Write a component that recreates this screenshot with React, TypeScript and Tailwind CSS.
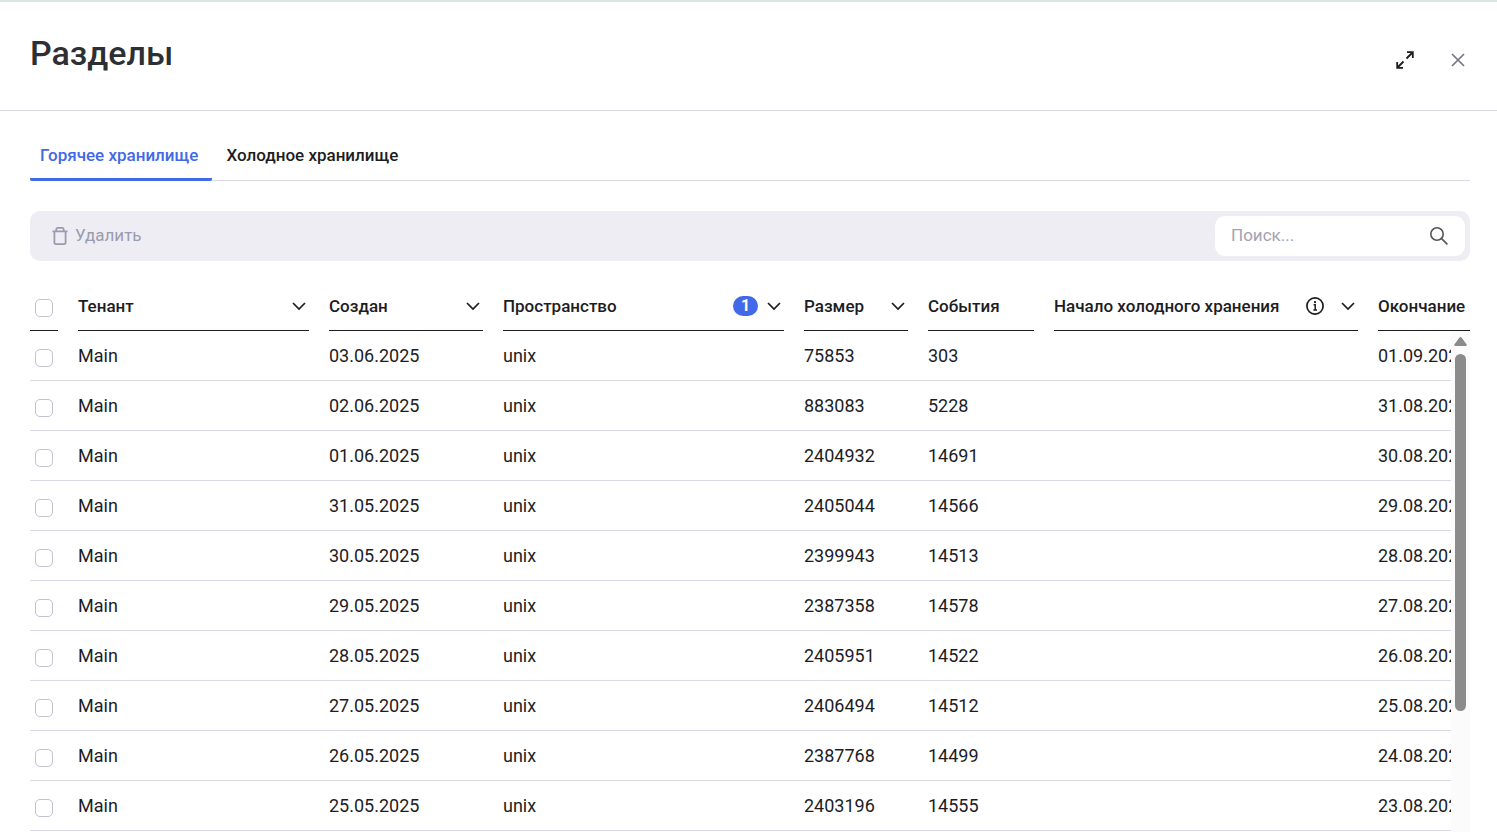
import React from "react";

const partitions = [
  { created: "03.06.2025", size: "75853", events: "303", expires: "01.09.2025" },
  { created: "02.06.2025", size: "883083", events: "5228", expires: "31.08.2025" },
  { created: "01.06.2025", size: "2404932", events: "14691", expires: "30.08.2025" },
  { created: "31.05.2025", size: "2405044", events: "14566", expires: "29.08.2025" },
  { created: "30.05.2025", size: "2399943", events: "14513", expires: "28.08.2025" },
  { created: "29.05.2025", size: "2387358", events: "14578", expires: "27.08.2025" },
  { created: "28.05.2025", size: "2405951", events: "14522", expires: "26.08.2025" },
  { created: "27.05.2025", size: "2406494", events: "14512", expires: "25.08.2025" },
  { created: "26.05.2025", size: "2387768", events: "14499", expires: "24.08.2025" },
  { created: "25.05.2025", size: "2403196", events: "14555", expires: "23.08.2025" },
];

const Chevron = () => (
  <svg width="14" height="10" viewBox="0 0 14 10" fill="none" stroke="currentColor" strokeWidth="1.7">
    <path d="M1 2l6 6 6-6" />
  </svg>
);

const ExpandIcon = () => (
  <svg width="18" height="18" viewBox="0 0 18 18" fill="none" stroke="currentColor" strokeWidth="1.8">
    <path d="M11 1.2h5.8V7M16.5 1.5l-6 6M7 16.8H1.2V11M1.5 16.5l6-6" />
  </svg>
);

const CloseIcon = () => (
  <svg width="14" height="14" viewBox="0 0 14 14" fill="none" stroke="currentColor" strokeWidth="1.7">
    <path d="M1 1l12 12M13 1L1 13" />
  </svg>
);

const TrashIcon = () => (
  <svg width="16" height="18" viewBox="0 0 16 18" fill="none" stroke="currentColor" strokeWidth="1.8">
    <path d="M0.5 4.3h15M4.3 4.3V2.4c0-.9.6-1.5 1.5-1.5h4.4c.9 0 1.5.6 1.5 1.5v1.9M2.4 4.3v11c0 1.1.6 1.8 1.7 1.8h7.8c1.1 0 1.7-.7 1.7-1.8v-11" />
  </svg>
);

const SearchIcon = () => (
  <svg width="18" height="18" viewBox="0 0 18 18" fill="none" stroke="currentColor" strokeWidth="1.6">
    <circle cx="7" cy="7" r="6.2" />
    <path d="M11.4 11.4l6 6" />
  </svg>
);

const InfoIcon = () => (
  <svg width="18" height="18" viewBox="0 0 18 18" fill="none" stroke="currentColor" strokeWidth="1.7">
    <circle cx="9" cy="9" r="8.1" />
    <path d="M7.6 7.8H9.2v5.4M7.4 13h3.6" strokeWidth="1.5" />
    <circle cx="9" cy="5.2" r="1.1" fill="currentColor" stroke="none" />
  </svg>
);

const Checkbox = ({
  label,
  checked,
  onChange,
}: {
  label: string;
  checked: boolean;
  onChange: () => void;
}) => (
  <input
    type="checkbox"
    aria-label={label}
    checked={checked}
    onChange={onChange}
    className="block w-[18px] h-[18px] appearance-none rounded-[5px] border border-[#c2c2d1] bg-white checked:bg-[#4169e8]"
  />
);

const HeaderCell = ({
  title,
  sortable,
  children,
}: {
  title: string;
  sortable?: boolean;
  children?: React.ReactNode;
}) => (
  <th scope="col" className="p-0 pr-5 font-medium text-left">
    <div className="flex items-center h-[50px] border-b border-[#1d1d1f] whitespace-nowrap">
      <span className="flex-1 pt-[3px]">{title}</span>
      {children}
      {sortable && (
        <button aria-label={`Сортировать: ${title}`} className="ml-[9px] mr-[3px]">
          <Chevron />
        </button>
      )}
    </div>
  </th>
);

export default function App() {
  const [tab, setTab] = React.useState("hot");
  const [query, setQuery] = React.useState("");
  const [selected, setSelected] = React.useState<string[]>([]);

  const toggle = (id: string) =>
    setSelected(selected.includes(id) ? selected.filter((s) => s !== id) : [...selected, id]);

  const allSelected = selected.length === partitions.length;
  const tabClass = (id: string) =>
    tab === id
      ? "h-[50px] pl-[10px] pr-[14px] pt-[3px] rounded-b-xs border-b-3 border-[#4169e8] text-[#4169e8]"
      : "h-[50px] pl-[10px] pr-[14px] pt-[3px] border-b-3 border-transparent";

  return (
    <div className="flex flex-col h-screen overflow-hidden border-t-2 border-[#dbe5e6] bg-white text-[#1d1d1f] text-[17px] font-['Roboto',sans-serif]">
      <header className="flex justify-between h-[109px] shrink-0 px-[30px] border-b border-[#d9d9e3]">
        <h1 className="pt-7 text-[34px] leading-[46px] font-medium text-[#2e2f33]">Разделы</h1>
        <div className="flex items-center gap-[37px] pt-2 pr-[2px]">
          <button aria-label="Развернуть">
            <ExpandIcon />
          </button>
          <button aria-label="Закрыть" className="text-[#767688]">
            <CloseIcon />
          </button>
        </div>
      </header>

      <main className="flex flex-col flex-1 min-h-0 pl-[30px] pr-[27px] pt-5">
        <div role="tablist" className="flex gap-1 shrink-0 border-b border-[#d9d9e3] font-medium">
          <button
            role="tab"
            aria-selected={tab === "hot"}
            onClick={() => setTab("hot")}
            className={`-mb-px ${tabClass("hot")}`}
          >
            Горячее хранилище
          </button>
          <button
            role="tab"
            aria-selected={tab === "cold"}
            onClick={() => setTab("cold")}
            className={`-mb-px ${tabClass("cold")}`}
          >
            Холодное хранилище
          </button>
        </div>

        <div className="flex items-center justify-between shrink-0 h-[50px] mt-[30px] pl-[22px] pr-[5px] rounded-[10px] bg-[#eeedf3]">
          <button disabled={!selected.length} className="flex items-center gap-[7px] text-[#9b9bae]">
            <TrashIcon />
            Удалить
          </button>
          <label className="flex items-center w-[250px] h-10 pl-4 pr-[17px] rounded-[10px] bg-white text-[#55555a]">
            <input
              type="text"
              aria-label="Поиск"
              placeholder="Поиск..."
              value={query}
              onChange={(e) => setQuery(e.target.value)}
              className="flex-1 min-w-0 outline-none placeholder:text-[#a3a3b1]"
            />
            <SearchIcon />
          </label>
        </div>

        <div className="relative flex-1 min-h-0 mt-5 overflow-hidden">
          <table className="w-full min-w-[1440px] table-fixed border-separate border-spacing-0">
            <colgroup>
              <col className="w-[48px]" />
              <col className="w-[251px]" />
              <col className="w-[174px]" />
              <col className="w-[301px]" />
              <col className="w-[124px]" />
              <col className="w-[126px]" />
              <col className="w-[324px]" />
              <col />
            </colgroup>
            <thead>
              <tr>
                <th scope="col" className="p-0 pr-5">
                  <div className="flex items-center h-[50px] pl-[5px] pt-1 border-b border-[#1d1d1f]">
                    <Checkbox
                      label="Выбрать все"
                      checked={allSelected}
                      onChange={() => setSelected(allSelected ? [] : partitions.map((p) => p.created))}
                    />
                  </div>
                </th>
                <HeaderCell title="Тенант" sortable />
                <HeaderCell title="Создан" sortable />
                <HeaderCell title="Пространство" sortable>
                  <span className="w-[25px] h-5 rounded-full bg-[#4169e8] text-white text-base leading-5 font-bold text-center">
                    1
                  </span>
                </HeaderCell>
                <HeaderCell title="Размер" sortable />
                <HeaderCell title="События" />
                <HeaderCell title="Начало холодного хранения" sortable>
                  <button aria-label="Справка" className="mr-2">
                    <InfoIcon />
                  </button>
                </HeaderCell>
                <th scope="col" className="p-0 font-medium text-left">
                  <div className="flex items-center h-[50px] pt-[3px] border-b border-[#1d1d1f]">
                    Окончание
                  </div>
                </th>
              </tr>
            </thead>
            <tbody className="text-lg">
              {partitions.map((p) => (
                <tr key={p.created} className="h-[50px] *:border-b *:border-[#d9d9e8]">
                  <td className="p-0 pl-[5px] pt-1">
                    <Checkbox
                      label={`Выбрать ${p.created}`}
                      checked={selected.includes(p.created)}
                      onChange={() => toggle(p.created)}
                    />
                  </td>
                  <td className="p-0">Main</td>
                  <td className="p-0">{p.created}</td>
                  <td className="p-0">unix</td>
                  <td className="p-0">{p.size}</td>
                  <td className="p-0">{p.events}</td>
                  <td className="p-0"></td>
                  <td className="p-0">{p.expires}</td>
                </tr>
              ))}
            </tbody>
          </table>

          {/* scrollbar over the table body */}
          <div className="absolute right-0 top-[50px] bottom-0 flex flex-col items-center w-[19px] pt-[6px] gap-2 bg-[#fbfbfb] text-[#8b8b8b]">
            <svg width="13" height="9" viewBox="0 0 13 9" fill="currentColor">
              <path d="M5.5.6a1.3 1.3 0 0 1 2 0l5 6.6c.5.8.1 1.8-.9 1.8H1.4c-1 0-1.4-1-.9-1.8z" />
            </svg>
            <div className="w-[11px] h-[357px] rounded-full bg-[#8b8b8b]"></div>
          </div>
        </div>
      </main>
    </div>
  );
}
